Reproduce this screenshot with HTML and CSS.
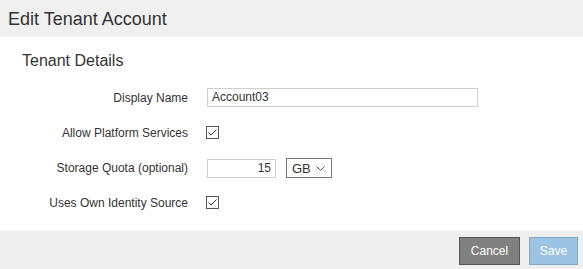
FILE: index.html
```html
<!DOCTYPE html>
<html>
<head>
<meta charset="utf-8">
<link rel="stylesheet" href="styles.css">
</head>
<body>
<div class="dialog">
  <div class="header"><h1 class="title">Edit Tenant Account</h1></div>
  <div class="content">
    <h2 class="section-title">Tenant Details</h2>
    <div class="form">
      <label class="label">Display Name</label>
      <div class="control"><div class="text-input wide">Account03</div></div>

      <label class="label">Allow Platform Services</label>
      <div class="control">
        <span class="checkbox"><svg width="13" height="13" viewBox="0 0 13 13"><rect x="0.5" y="0.5" width="12" height="12" fill="#fff" stroke="#555"/><path d="M2.5 6.5 L5 9 L10.5 3.5" fill="none" stroke="#333" stroke-width="1"/></svg></span>
      </div>

      <label class="label">Storage Quota (optional)</label>
      <div class="control quota">
        <div class="text-input number">15</div>
        <div class="select">GB <svg class="chev" width="9" height="5" viewBox="0 0 9 5"><path d="M0.5 0.5 L4.5 4.5 L8.5 0.5" fill="none" stroke="#555" stroke-width="1"/></svg></div>
      </div>

      <label class="label">Uses Own Identity Source</label>
      <div class="control">
        <span class="checkbox"><svg width="13" height="13" viewBox="0 0 13 13"><rect x="0.5" y="0.5" width="12" height="12" fill="#fff" stroke="#555"/><path d="M2.5 6.5 L5 9 L10.5 3.5" fill="none" stroke="#333" stroke-width="1"/></svg></span>
      </div>
    </div>
  </div>
  <div class="footer">
    <button class="btn cancel">Cancel</button>
    <button class="btn save">Save</button>
  </div>
</div>
</body>
</html>
```

FILE: styles.css
```css
* { box-sizing: border-box; }
html, body { margin: 0; padding: 0; background: #fff; }
body { font-family: "Liberation Sans", Arial, sans-serif; color: #333; width: 583px; height: 269px; overflow: hidden; }
.dialog { display: flex; flex-direction: column; height: 269px; }
.header { height: 37px; background: #f0f0f0; display: flex; align-items: center; padding-left: 8px; }
.title { margin: 0; font-size: 18px; font-weight: normal; line-height: 20px; color: #333; }
.content { flex: 1; padding-top: 15px; }
.section-title { margin: 0 0 10px 22px; font-size: 16px; font-weight: normal; line-height: 18px; color: #333; }
.form { display: grid; grid-template-columns: 188px 1fr; grid-auto-rows: 35px; column-gap: 19px; align-items: center; }
.label { text-align: right; font-size: 12px; color: #333; }
.control { display: flex; align-items: center; }
.text-input { height: 19px; border: 1px solid #cfcfcf; font-size: 12px; line-height: 17px; padding: 0 4px; color: #333; background: #fff; }
.text-input.wide { width: 271px; }
.text-input.number { width: 69px; text-align: right; padding-right: 4px; }
.quota { gap: 10px; padding-top: 1px; }
.select { width: 46px; height: 20px; border: 1px solid #777; font-size: 13px; display: flex; align-items: center; padding-left: 5px; gap: 5px; color: #333; }
.chev { margin-top: 1px; }
.checkbox { display: inline-flex; margin-left: -1px; }
.footer { height: 38px; background: #efefef; display: flex; justify-content: flex-end; align-items: flex-start; padding: 6px 5px 0 0; gap: 9px; }
.btn { height: 28px; font-family: "Liberation Sans", Arial, sans-serif; font-size: 12px; color: #fff; padding: 0; }
.cancel { width: 61px; background: #808080; border: 1px solid #555; }
.save { width: 49px; background: #9dc3e2; border: 1px solid #7fa8cc; }
```
